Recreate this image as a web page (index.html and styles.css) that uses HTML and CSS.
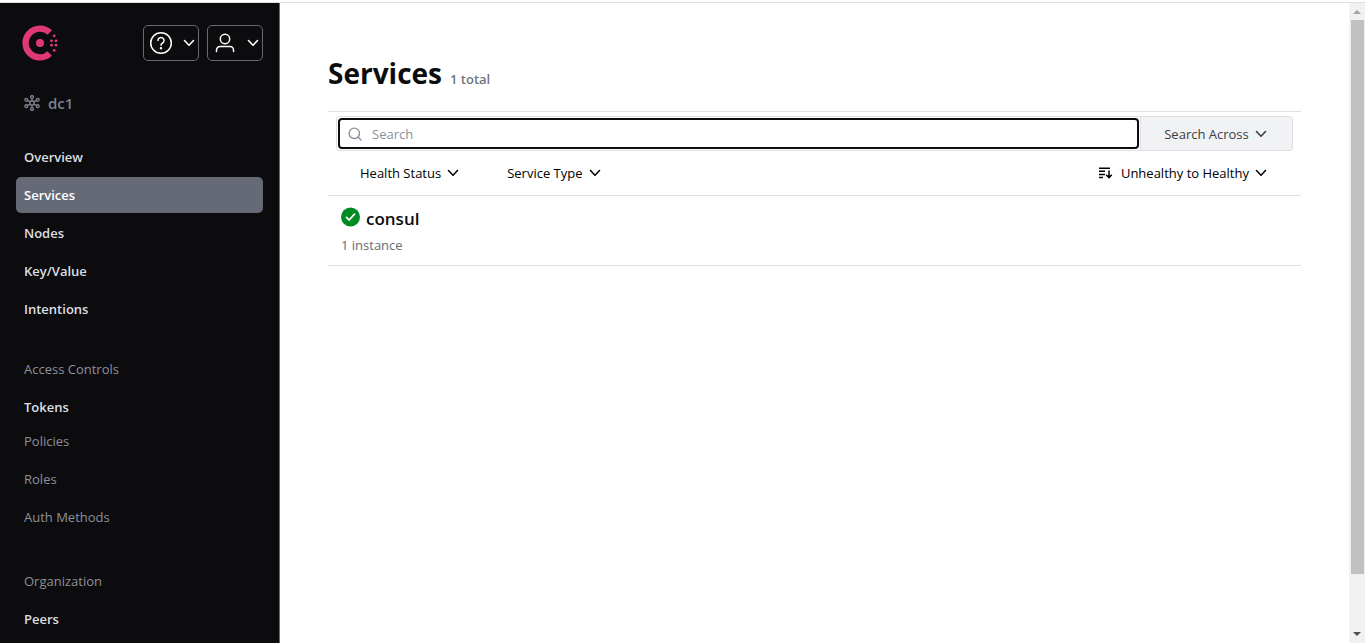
FILE: index.html
```html
<!DOCTYPE html>
<html lang="en">
<head>
<meta charset="utf-8">
<title>Services - Consul</title>
<link rel="stylesheet" href="styles.css">
</head>
<body>
<svg class="sprite" aria-hidden="true">
  <symbol id="chevron" viewBox="0 0 12 12"><path d="M1.500 3.500 6 8.200l4.500-4.700" fill="none" stroke="currentColor" stroke-width="1.600" stroke-linecap="round" stroke-linejoin="round"/></symbol>
</svg>
<div class="app">
  <aside class="sidebar">
    <header class="topbar">
      <a class="logo" href="#" aria-label="Consul">
        <svg width="36" height="36" viewBox="0 0 36 36" fill="#e03875">
          <path d="M27.800 28.500A14.400 14.400 0 1 1 27.800 7.500" fill="none" stroke="#e03875" stroke-width="6.400"/>
          <circle cx="18" cy="18" r="4"/>
          <circle cx="32.200" cy="10.800" r="1.400"/><circle cx="29.500" cy="15.800" r="1.400"/><circle cx="34" cy="15.800" r="1.400"/>
          <circle cx="29.500" cy="20.200" r="1.400"/><circle cx="34" cy="20.200" r="1.400"/><circle cx="32.200" cy="25.400" r="1.400"/>
        </svg>
      </a>
      <button class="menu-button" type="button" aria-label="Help">
        <svg width="24" height="24" viewBox="0 0 24 24" fill="none" stroke="currentColor" stroke-width="1.500" stroke-linecap="round"><circle cx="12" cy="12" r="10.300"/><path d="M9 9.500a3 3 0 1 1 4.600 2.500C12.500 12.700 12 13.200 12 14.300"/><circle cx="12" cy="17.300" r=".5" fill="currentColor"/></svg>
        <svg width="12" height="12"><use href="#chevron"/></svg>
      </button>
      <button class="menu-button" type="button" aria-label="Account">
        <svg width="24" height="24" viewBox="0 0 24 24" fill="none" stroke="currentColor" stroke-width="1.500" stroke-linecap="round"><circle cx="12" cy="8" r="4.700"/><path d="M3.500 20.500v-1.500a3.500 3.500 0 0 1 3.500-3.500h10a3.500 3.500 0 0 1 3.500 3.500v1.500"/></svg>
        <svg width="12" height="12"><use href="#chevron"/></svg>
      </button>
    </header>
    <div class="datacenter">
      <svg width="16" height="16" viewBox="0 0 16 16" fill="none" stroke="currentColor" stroke-width="1.400"><circle cx="8" cy="8" r="2.200"/><circle cx="8" cy="2" r="1.400"/><circle cx="8" cy="14" r="1.400"/><circle cx="2.300" cy="4.800" r="1.400"/><circle cx="13.700" cy="4.800" r="1.400"/><circle cx="2.300" cy="11.200" r="1.400"/><circle cx="13.700" cy="11.200" r="1.400"/><path d="M8 3.400v2.400M8 10.200v2.400M3.500 5.500l2.600 1.400M12.500 5.500 9.900 6.900M3.500 10.500l2.600-1.400M12.500 10.500 9.900 9.100"/></svg>
      <span>dc1</span>
    </div>
    <nav class="nav">
      <a class="nav-item" href="#">Overview</a>
      <a class="nav-item active" href="#" aria-current="page">Services</a>
      <a class="nav-item" href="#">Nodes</a>
      <a class="nav-item" href="#">Key/Value</a>
      <a class="nav-item" href="#">Intentions</a>
    </nav>
    <nav class="nav" aria-labelledby="access">
      <div class="nav-title" id="access">Access Controls</div>
      <a class="nav-item parent" href="#">Tokens</a>
      <a class="nav-item muted" href="#">Policies</a>
      <a class="nav-item muted" href="#">Roles</a>
      <a class="nav-item muted" href="#">Auth Methods</a>
    </nav>
    <nav class="nav organization" aria-labelledby="org">
      <div class="nav-title" id="org">Organization</div>
      <a class="nav-item" href="#">Peers</a>
    </nav>
  </aside>
  <main class="content">
    <header class="page-header">
      <h1>Services</h1>
      <span class="total">1 total</span>
    </header>
    <div class="toolbar">
      <form class="search" role="search">
        <label class="search-field">
          <svg width="14" height="14" viewBox="0 0 14 14" fill="none" stroke="currentColor" stroke-width="1.400" stroke-linecap="round"><circle cx="6.300" cy="6.300" r="5.200"/><path d="m10.200 10.200 2.800 2.800"/></svg>
          <input type="search" placeholder="Search" aria-label="Search">
        </label>
        <button class="across" type="button">Search Across <svg width="12" height="12"><use href="#chevron"/></svg></button>
      </form>
      <div class="filters">
        <button class="filter" type="button">Health Status <svg width="12" height="12"><use href="#chevron"/></svg></button>
        <button class="filter" type="button">Service Type <svg width="12" height="12"><use href="#chevron"/></svg></button>
        <button class="filter sort" type="button">
          <svg width="14" height="12" viewBox="0 0 14 12" fill="none" stroke="currentColor" stroke-width="1.500"><path d="M0 1.200h11M0 4.300h6M0 7.400h6M0 10.500h4M10 3.500v7M7.200 7.800 10 10.600l2.800-2.800"/></svg>
          <span>Unhealthy to Healthy</span> <svg width="12" height="12"><use href="#chevron"/></svg>
        </button>
      </div>
    </div>
    <ul class="services">
      <li class="service">
        <a class="service-name" href="#">
          <svg width="20" height="20" viewBox="0 0 20 20"><circle cx="10.500" cy="10" r="9.500" fill="#008a22"/><path d="m6.500 10.400 2.700 2.600 5.300-5.800" fill="none" stroke="#fff" stroke-width="1.800" stroke-linecap="round" stroke-linejoin="round"/></svg>
          consul
        </a>
        <div class="instances">1 instance</div>
      </li>
    </ul>
  </main>
  <div class="scrollbar" aria-hidden="true">
    <svg width="16" height="17" viewBox="0 0 16 17"><path d="m4 11 4-4 4 4z" fill="#a3a3a3"/></svg>
    <div class="thumb"></div>
    <svg width="16" height="17" viewBox="0 0 16 17"><path d="m4 6 4 4 4-4z" fill="#505050"/></svg>
  </div>
</div>
</body>
</html>
```
FILE: styles.css
```css
* { box-sizing: border-box; }
body {
  margin: 0;
  padding-top: 2px;
  height: 100vh;
  overflow: hidden;
  background: #fff;
  color: #0c0c0e;
  font: 13px/18px "Open Sans", "Noto Sans", sans-serif;
}
a { color: inherit; text-decoration: none; }
button { font: inherit; color: inherit; background: none; border: 0; padding: 0; cursor: pointer; }
svg { flex: none; }
.sprite { position: absolute; width: 0; height: 0; }
.app { display: flex; height: 100%; border-top: 1px solid #dedfe1; }

.sidebar {
  flex: 0 0 280px;
  padding: 22px 16px 0;
  overflow: hidden;
  background: #0c0c0e;
  border-right: 1px solid #656a76;
  color: #dedfe3;
}
.topbar { display: flex; align-items: center; gap: 8px; }
.logo { display: flex; margin: 0 auto 0 6px; }
.menu-button {
  display: flex;
  align-items: center;
  justify-content: space-between;
  width: 56px;
  height: 36px;
  padding: 0 3px 0 5px;
  border: 1px solid #656a76;
  border-radius: 5px;
  color: #fff;
}
.datacenter {
  display: flex;
  align-items: center;
  gap: 8px;
  padding: 32px 8px 26px;
  font-size: 15px;
  line-height: 20px;
  font-weight: 600;
  color: #7d818d;
}
.nav { display: flex; flex-direction: column; gap: 2px; margin-bottom: 24px; }
.organization { margin-top: 28px; }
.nav-item, .nav-title { padding: 9px 8px; border-radius: 5px; font-weight: 600; }
.nav-title { color: #8c909c; font-weight: 500; }
.nav-item.active { background: #656a76; color: #fff; }
.nav-item.parent { padding-bottom: 5px; }
.nav-item.muted { font-weight: 400; color: #8c909c; }

.content { flex: 1; min-width: 0; padding: 50px 48px 0; }
.page-header { display: flex; align-items: baseline; gap: 8px; padding-bottom: 18px; }
h1 { margin: 0; font-size: 28px; line-height: 40px; font-weight: 700; }
.total { font-weight: 600; color: #6f7380; }
.toolbar { border: solid #dedfe1; border-width: 1px 0; padding: 4px 8px 0; }
.search { display: flex; height: 35px; border: 1px solid #dedfe3; border-radius: 3px; }
.search-field {
  flex: 1;
  display: flex;
  align-items: center;
  gap: 10px;
  margin: 1px;
  padding: 0 8px;
  border: 2px solid #0c0c0e;
  border-radius: 4px;
  color: #8c909c;
}
.search-field input { flex: 1; min-width: 0; padding: 0; border: 0; outline: 0; background: none; font: inherit; }
.search-field input::placeholder { color: #8c909c; }
.across {
  display: flex;
  align-items: center;
  justify-content: center;
  gap: 6px;
  width: 152px;
  padding-right: 2px;
  border-left: 1px solid #dedfe3;
  background: #f1f2f3;
  color: #3b3d45;
  font-weight: 500;
}
.filters { display: flex; align-items: center; gap: 48px; height: 44px; padding: 0 26px 0 24px; }
.filter { display: flex; align-items: center; gap: 6px; color: #000; font-weight: 500; }
.sort { margin-left: auto; }
.sort svg:first-child { margin-right: 2px; }
.services { margin: 0; padding: 0; list-style: none; }
.service { padding: 10px 12px 11px; border-bottom: 1px solid #dedfe1; }
.service-name { display: flex; align-items: center; gap: 6px; font-size: 17px; line-height: 26px; font-weight: 600; }
.service-name svg { margin-bottom: 4px; }
.instances { padding: 4px 1px 0; color: #656a76; }

.scrollbar { display: flex; flex-direction: column; width: 16px; background: #f1f1f1; }
.thumb { flex: 0 0 86.5%; margin: 0 1px 0 2px; background: #c1c1c1; }
.scrollbar svg:last-child { margin-top: auto; }
```
